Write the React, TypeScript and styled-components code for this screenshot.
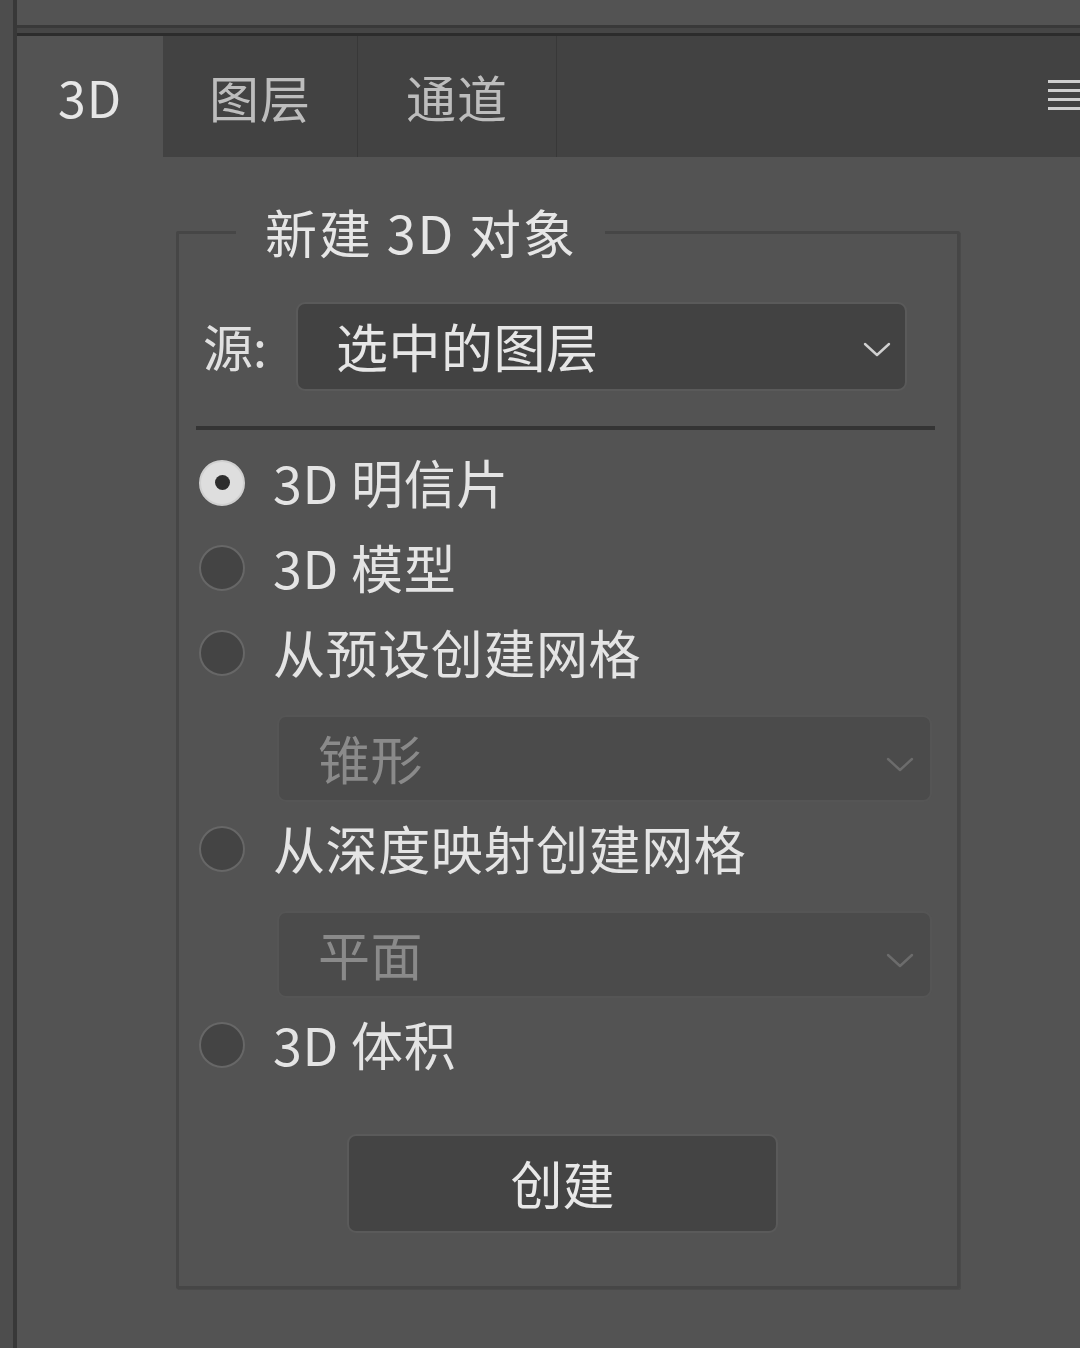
import React from "react";
import styled, { createGlobalStyle } from "styled-components";

const GlobalStyle = createGlobalStyle`
  html, body {
    margin: 0;
    padding: 0;
    background: #535353;
  }
  body {
    font-family: "Noto Sans CJK SC", "Noto Sans", sans-serif;
    color: #e4e4e4;
  }
`;

const Screen = styled.div`
  display: flex;
  flex-direction: row;
  width: 1080px;
  height: 1348px;
  overflow: hidden;
  background: #535353;
`;
Screen.displayName = "Screen";

const LeftEdge = styled.div`
  flex: 0 0 13px;
  background: #4d4d4d;
  border-right: 4px solid #383838;
`;
LeftEdge.displayName = "LeftEdge";

const Column = styled.div`
  flex: 1 1 auto;
  display: flex;
  flex-direction: column;
  min-width: 0;
`;
Column.displayName = "Column";

const TopStrip = styled.div`
  flex: 0 0 25px;
  background: #535353;
`;
TopStrip.displayName = "TopStrip";

const TopDivider = styled.div`
  flex: 0 0 auto;
  height: 5px;
  background: #464646;
  border-top: 3px solid #393939;
  border-bottom: 3px solid #2c2c2c;
`;
TopDivider.displayName = "TopDivider";

const TabBar = styled.div`
  flex: 0 0 121px;
  display: flex;
  flex-direction: row;
  align-items: stretch;
  background: #424242;
`;
TabBar.displayName = "TabBar";

const Tab = styled.div<{ $active?: boolean; $width: number }>`
  flex: 0 0 ${(p) => p.$width}px;
  box-sizing: border-box;
  display: flex;
  align-items: center;
  justify-content: center;
  font-size: 50px;
  line-height: 1;
  letter-spacing: 1px;
  background: ${(p) => (p.$active ? "#535353" : "#424242")};
  color: ${(p) => (p.$active ? "#e6e6e6" : "#bdbdbd")};
  border-right: ${(p) => (p.$active ? "none" : "1px solid #383838")};
  padding-bottom: 2px;
`;
Tab.displayName = "Tab";

const MenuButton = styled.div`
  margin-left: auto;
  width: 32px;
  display: flex;
  flex-direction: column;
  justify-content: center;
  gap: 6px;
  padding-bottom: 4px;

  span {
    display: block;
    height: 3px;
    background: #cfcfcf;
  }
`;
MenuButton.displayName = "MenuButton";

const Body = styled.div`
  flex: 1 1 auto;
  padding: 49px 0 0 159px;
  background: #535353;
`;
Body.displayName = "Body";

const GroupBox = styled.fieldset`
  box-sizing: border-box;
  width: 784px;
  margin: 0;
  padding: 0;
  border: 3px solid #464646;
  border-radius: 2px;
  box-shadow: 1px 1px 0 #4a4a4a;
`;
GroupBox.displayName = "GroupBox";

const GroupTitle = styled.legend`
  margin-left: 57px;
  padding: 0 28px 0 29px;
  font-size: 52px;
  line-height: 52px;
  letter-spacing: 2px;
  color: #e6e6e6;
`;
GroupTitle.displayName = "GroupTitle";

const GroupContent = styled.div`
  display: flex;
  flex-direction: column;
  padding: 44px 22px 53px 17px;
`;
GroupContent.displayName = "GroupContent";

const SourceRow = styled.div`
  display: flex;
  flex-direction: row;
  align-items: center;
  padding-left: 7px;
  gap: 29px;
`;
SourceRow.displayName = "SourceRow";

const Label = styled.span`
  font-size: 50px;
  line-height: 1;
  color: #e0e0e0;
  padding-bottom: 4px;
`;
Label.displayName = "Label";

const Select = styled.div<{ $disabled?: boolean }>`
  box-sizing: border-box;
  flex: 0 0 auto;
  display: flex;
  flex-direction: row;
  align-items: center;
  height: ${(p) => (p.$disabled ? 87 : 89)}px;
  width: ${(p) => (p.$disabled ? 655 : 611)}px;
  padding: 0 ${(p) => (p.$disabled ? 16 : 14)}px 0 ${(p) => (p.$disabled ? 39 : 38)}px;
  background: ${(p) => (p.$disabled ? "#4b4b4b" : "#424242")};
  border: 2px solid ${(p) => (p.$disabled ? "#555555" : "#5a5a5a")};
  border-radius: 9px;
  font-size: 52px;
  line-height: 1;
  letter-spacing: 0.5px;
  color: ${(p) => (p.$disabled ? "#8a8a8a" : "#e6e6e6")};

  svg {
    margin-left: auto;
    margin-top: ${(p) => (p.$disabled ? 12 : 6)}px;
  }
`;
Select.displayName = "Select";

const SelectText = styled.span`
  padding-bottom: 2px;
`;
SelectText.displayName = "SelectText";

const Separator = styled.div`
  height: 4px;
  margin: 35px 0 10px 0;
  background: #343434;
`;
Separator.displayName = "Separator";

const RadioRow = styled.div`
  display: flex;
  flex-direction: row;
  align-items: center;
  height: 85px;
  padding-left: 3px;
  gap: 28px;
`;
RadioRow.displayName = "RadioRow";

const RadioCircle = styled.span<{ $checked?: boolean }>`
  box-sizing: border-box;
  flex: 0 0 46px;
  width: 46px;
  height: 46px;
  border-radius: 50%;
  display: flex;
  align-items: center;
  justify-content: center;
  background: ${(p) => (p.$checked ? "#dedede" : "#444444")};
  border: 2px solid ${(p) => (p.$checked ? "#d0d0d0" : "#676767")};

  &::after {
    content: "";
    display: ${(p) => (p.$checked ? "block" : "none")};
    width: 15px;
    height: 15px;
    border-radius: 50%;
    background: #2e2e2e;
  }
`;
RadioCircle.displayName = "RadioCircle";

const RadioLabel = styled.span`
  font-size: 52px;
  line-height: 1;
  letter-spacing: 0.6px;
  color: #e4e4e4;
  white-space: nowrap;
  padding-bottom: 2px;
`;
RadioLabel.displayName = "RadioLabel";

const SubSelect = styled.div`
  display: flex;
  padding: 20px 0 4px 81px;
`;
SubSelect.displayName = "SubSelect";

const ButtonRow = styled.div`
  display: flex;
  justify-content: center;
  padding-top: 47px;
`;
ButtonRow.displayName = "ButtonRow";

const Button = styled.div`
  box-sizing: border-box;
  width: 431px;
  height: 99px;
  display: flex;
  align-items: center;
  justify-content: center;
  background: #444444;
  border: 2px solid #5a5a5a;
  border-radius: 9px;
  font-size: 52px;
  line-height: 1;
  color: #e8e8e8;
  padding-bottom: 2px;
  margin-left: -6px;
`;
Button.displayName = "Button";

function Chevron({ color }: { color: string }) {
  return (
    <svg width="28" height="16" viewBox="0 0 28 16">
      <polyline
        points="2,2 14,13 26,2"
        fill="none"
        stroke={color}
        strokeWidth="2.4"
        strokeLinecap="round"
        strokeLinejoin="round"
      />
    </svg>
  );
}

const options = [
  { label: "3D 明信片", checked: true },
  { label: "3D 模型" },
  { label: "从预设创建网格", sub: "锥形" },
  { label: "从深度映射创建网格", sub: "平面" },
  { label: "3D 体积" },
];

export default function App() {
  return (
    <Screen>
      <GlobalStyle />
      <LeftEdge />
      <Column>
        <TopStrip />
        <TopDivider />
        <TabBar>
          <Tab $active $width={146}>3D</Tab>
          <Tab $width={195}>图层</Tab>
          <Tab $width={199}>通道</Tab>
          <MenuButton>
            <span />
            <span />
            <span />
            <span />
          </MenuButton>
        </TabBar>
        <Body>
          <GroupBox>
            <GroupTitle>新建 3D 对象</GroupTitle>
            <GroupContent>
              <SourceRow>
                <Label>源:</Label>
                <Select>
                  <SelectText>选中的图层</SelectText>
                  <Chevron color="#d0d0d0" />
                </Select>
              </SourceRow>
              <Separator />
              {options.map((o) => (
                <React.Fragment key={o.label}>
                  <RadioRow>
                    <RadioCircle $checked={o.checked} />
                    <RadioLabel>{o.label}</RadioLabel>
                  </RadioRow>
                  {o.sub && (
                    <SubSelect>
                      <Select $disabled>
                        <SelectText>{o.sub}</SelectText>
                        <Chevron color="#6c6c6c" />
                      </Select>
                    </SubSelect>
                  )}
                </React.Fragment>
              ))}
              <ButtonRow>
                <Button>创建</Button>
              </ButtonRow>
            </GroupContent>
          </GroupBox>
        </Body>
      </Column>
    </Screen>
  );
}
